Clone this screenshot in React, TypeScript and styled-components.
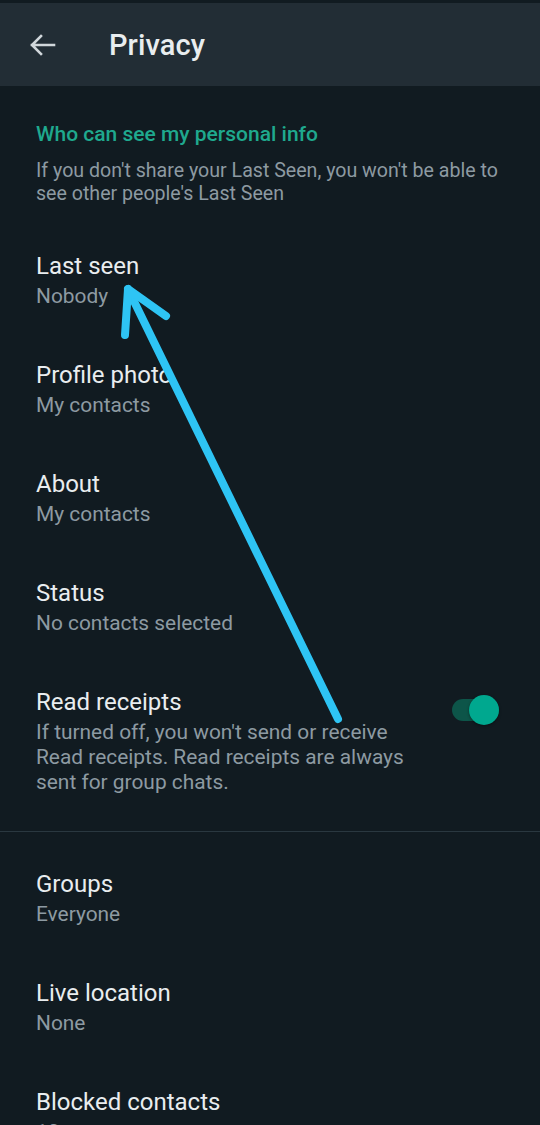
import React from "react";
import styled, { createGlobalStyle } from "styled-components";

const Global = createGlobalStyle`
  html, body { margin: 0; padding: 0; background: #111b21; }
  body { font-family: Roboto, "Noto Sans", "Liberation Sans", sans-serif; -webkit-font-smoothing: antialiased; }
  * { box-sizing: border-box; }
`;

const Page = styled.div`
  position: relative;
  width: 540px;
  height: 1125px;
  overflow: hidden;
  background: #111b21;
  padding-top: 3px;
`;

const Header = styled.header`
  height: 83px;
  background: #222d35;
  display: flex;
  align-items: center;
  padding-left: 28px;
  gap: 53px;
`;

const BackButton = styled.div`
  width: 28px;
  height: 28px;
  display: flex;
  align-items: center;
  justify-content: center;
  color: #d1d7db;
`;

const Title = styled.h1`
  margin: 0;
  font-size: 29px;
  font-weight: 500;
  color: #e9edef;
  letter-spacing: 0.1px;
`;

const Section = styled.section<{ $pt: number }>`
  padding-top: ${(p) => p.$pt}px;
`;

const SectionHead = styled.div`
  padding: 0 36px;
  margin-bottom: 21px;
`;

const Heading = styled.div`
  font-size: 21px;
  line-height: 25px;
  font-weight: 500;
  color: #1fa98e;
  margin-bottom: 12px;
`;

const Note = styled.div`
  font-size: 19.6px;
  line-height: 23px;
  color: #8d9aa2;
`;

const Item = styled.div`
  display: flex;
  align-items: flex-start;
  justify-content: space-between;
  padding: 26px 41px 26px 36px;
`;

const ItemText = styled.div`
  flex: 0 1 390px;
  display: flex;
  flex-direction: column;
  gap: 4px;
`;

const ItemTitle = styled.div`
  font-size: 24px;
  line-height: 28px;
  color: #e9edef;
`;

const ItemSub = styled.div`
  font-size: 20.9px;
  line-height: 25px;
  color: #8d9aa2;
`;

const Toggle = styled.div`
  position: relative;
  flex: none;
  width: 47px;
  height: 22px;
  margin-top: 11px;
  border-radius: 11px;
  background: #0d5549;
`;

const Knob = styled.div`
  position: absolute;
  right: 0;
  top: 50%;
  width: 30px;
  height: 30px;
  margin-top: -15px;
  border-radius: 50%;
  background: #00a88f;
  box-shadow: 0 1px 3px rgba(0, 0, 0, 0.4);
`;

const Divider = styled.hr`
  margin: 10px 0 0;
  border: 0;
  height: 1px;
  background: #2a3840;
`;

const Annotation = styled.svg`
  position: absolute;
  left: 0;
  top: 0;
  pointer-events: none;
`;

type Row = { title: string; sub: string };

const first: Row[] = [
  { title: "Last seen", sub: "Nobody" },
  { title: "Profile photo", sub: "My contacts" },
  { title: "About", sub: "My contacts" },
  { title: "Status", sub: "No contacts selected" },
];

const second: Row[] = [
  { title: "Groups", sub: "Everyone" },
  { title: "Live location", sub: "None" },
  { title: "Blocked contacts", sub: "10" },
];

export default function App() {
  return (
    <>
      <Global />
      <Page>
        <Header>
          <BackButton>
            <svg width="27" height="24" viewBox="0 0 27 24" fill="none">
              <path
                d="M25 12H3M12 3L3 12l9 9"
                stroke="currentColor"
                strokeWidth="2.6"
                strokeLinecap="square"
              />
            </svg>
          </BackButton>
          <Title>Privacy</Title>
        </Header>

        <Section $pt={36}>
          <SectionHead>
            <Heading>Who can see my personal info</Heading>
            <Note>
              If you don't share your Last Seen, you won't be able to see other
              people's Last Seen
            </Note>
          </SectionHead>
          {first.map((r) => (
            <Item key={r.title}>
              <ItemText>
                <ItemTitle>{r.title}</ItemTitle>
                <ItemSub>{r.sub}</ItemSub>
              </ItemText>
            </Item>
          ))}
          <Item>
            <ItemText>
              <ItemTitle>Read receipts</ItemTitle>
              <ItemSub>
                If turned off, you won't send or receive Read receipts. Read
                receipts are always sent for group chats.
              </ItemSub>
            </ItemText>
            <Toggle>
              <Knob />
            </Toggle>
          </Item>
        </Section>

        <Divider />

        <Section $pt={12}>
          {second.map((r) => (
            <Item key={r.title}>
              <ItemText>
                <ItemTitle>{r.title}</ItemTitle>
                <ItemSub>{r.sub}</ItemSub>
              </ItemText>
            </Item>
          ))}
        </Section>

        <Annotation width="540" height="1125" viewBox="0 0 540 1125">
          <g
            stroke="#2ec4f4"
            strokeWidth="8"
            strokeLinecap="round"
            strokeLinejoin="round"
            fill="none"
          >
            <path d="M338 719L128 289" />
            <path d="M125 335L128 289L166 316" />
          </g>
        </Annotation>
      </Page>
    </>
  );
}
